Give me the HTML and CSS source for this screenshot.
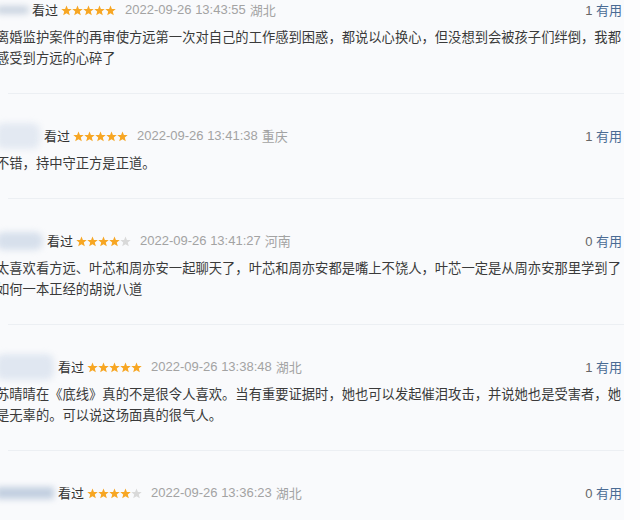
FILE: index.html
```html
<!DOCTYPE html>
<html lang="zh-CN">
<head>
<meta charset="utf-8">
<link rel="stylesheet" href="styles.css">
</head>
<body>
<svg width="0" height="0" class="defs">
  <defs>
    <symbol id="st" viewBox="0 0 11 11">
      <polygon points="5.5,0.4 6.9,3.9 10.7,4.1 7.8,6.5 8.8,10.3 5.5,8.2 2.2,10.3 3.2,6.5 0.3,4.1 4.1,3.9"/>
    </symbol>
  </defs>
</svg>
<div class="list">
  <div class="item">
    <div class="meta">
      <span class="name n1"></span>
      <span class="watched">看过</span>
      <svg class="stars" viewBox="0 0 55 11" width="55" height="11"><use href="#st" x="0" width="11" height="11" class="on"/><use href="#st" x="11" width="11" height="11" class="on"/><use href="#st" x="22" width="11" height="11" class="on"/><use href="#st" x="33" width="11" height="11" class="on"/><use href="#st" x="44" width="11" height="11" class="on"/></svg>
      <span class="date">2022-09-26 13:43:55</span>
      <span class="loc">湖北</span>
      <span class="useful"><span class="cnt">1</span> <span class="vote">有用</span></span>
    </div>
    <p class="text">离婚监护案件的再审使方远第一次对自己的工作感到困惑，都说以心换心，但没想到会被孩子们绊倒，我都感受到方远的心碎了</p>
  </div>
  <div class="sep"></div>
  <div class="item">
    <div class="meta">
      <span class="name n2"></span>
      <span class="watched">看过</span>
      <svg class="stars" viewBox="0 0 55 11" width="55" height="11"><use href="#st" x="0" width="11" height="11" class="on"/><use href="#st" x="11" width="11" height="11" class="on"/><use href="#st" x="22" width="11" height="11" class="on"/><use href="#st" x="33" width="11" height="11" class="on"/><use href="#st" x="44" width="11" height="11" class="on"/></svg>
      <span class="date">2022-09-26 13:41:38</span>
      <span class="loc">重庆</span>
      <span class="useful"><span class="cnt">1</span> <span class="vote">有用</span></span>
    </div>
    <p class="text">不错，持中守正方是正道。</p>
  </div>
  <div class="sep"></div>
  <div class="item">
    <div class="meta">
      <span class="name n3"></span>
      <span class="watched">看过</span>
      <svg class="stars" viewBox="0 0 55 11" width="55" height="11"><use href="#st" x="0" width="11" height="11" class="on"/><use href="#st" x="11" width="11" height="11" class="on"/><use href="#st" x="22" width="11" height="11" class="on"/><use href="#st" x="33" width="11" height="11" class="on"/><use href="#st" x="44" width="11" height="11" class="off"/></svg>
      <span class="date">2022-09-26 13:41:27</span>
      <span class="loc">河南</span>
      <span class="useful"><span class="cnt">0</span> <span class="vote">有用</span></span>
    </div>
    <p class="text">太喜欢看方远、叶芯和周亦安一起聊天了，叶芯和周亦安都是嘴上不饶人，叶芯一定是从周亦安那里学到了如何一本正经的胡说八道</p>
  </div>
  <div class="sep"></div>
  <div class="item">
    <div class="meta">
      <span class="name n4"></span>
      <span class="watched">看过</span>
      <svg class="stars" viewBox="0 0 55 11" width="55" height="11"><use href="#st" x="0" width="11" height="11" class="on"/><use href="#st" x="11" width="11" height="11" class="on"/><use href="#st" x="22" width="11" height="11" class="on"/><use href="#st" x="33" width="11" height="11" class="on"/><use href="#st" x="44" width="11" height="11" class="on"/></svg>
      <span class="date">2022-09-26 13:38:48</span>
      <span class="loc">湖北</span>
      <span class="useful"><span class="cnt">1</span> <span class="vote">有用</span></span>
    </div>
    <p class="text">苏晴晴在《底线》真的不是很令人喜欢。当有重要证据时，她也可以发起催泪攻击，并说她也是受害者，她是无辜的。可以说这场面真的很气人。</p>
  </div>
  <div class="sep"></div>
  <div class="item">
    <div class="meta">
      <span class="name n5"></span>
      <span class="watched">看过</span>
      <svg class="stars" viewBox="0 0 55 11" width="55" height="11"><use href="#st" x="0" width="11" height="11" class="on"/><use href="#st" x="11" width="11" height="11" class="on"/><use href="#st" x="22" width="11" height="11" class="on"/><use href="#st" x="33" width="11" height="11" class="on"/><use href="#st" x="44" width="11" height="11" class="off"/></svg>
      <span class="date">2022-09-26 13:36:23</span>
      <span class="loc">湖北</span>
      <span class="useful"><span class="cnt">0</span> <span class="vote">有用</span></span>
    </div>
  </div>
</div>
</body>
</html>
```
FILE: styles.css
```css
html, body {
  margin: 0;
  padding: 0;
  background: #fdfdfe;
  overflow: hidden;
}
.defs { position: absolute; }
.list {
  width: 628px;
  margin: -32px 0 0 -4px;
  background: #f9fafc;
  font-family: "Liberation Sans", "Noto Sans CJK SC", sans-serif;
  color: #3a3a3a;
}
.item {
  padding: 32px 0 25px 0;
}
.sep {
  height: 1px;
  margin-left: 12px;
  margin-right: 0;
  background: #eceff3;
}
.meta {
  display: flex;
  align-items: center;
  height: 20px;
  padding-right: 2px;
  font-size: 13px;
  line-height: 20px;
  white-space: nowrap;
}
.name {
  display: block;
  height: 22px;
  margin-right: 4px;
  background: #dfe6f0;
  filter: blur(3px);
  border-radius: 8px;
}
.n1 { width: 33px; height: 8px; margin-right: 3px; background: #c9d3e0; }
.n2 { width: 44px; height: 26px; background: #e3e9f2; }
.n3 { width: 47px; height: 18px; background: #d7e0ec; }
.n4 { width: 58px; height: 26px; background: #e0e7f1; }
.n5 { width: 58px; height: 12px; background: #c2cfe0; border-radius: 2px; }
.watched {
  font-family: "Noto Sans CJK SC", sans-serif;
  color: #333;
  margin-right: 3px;
}
.stars {
  display: block;
  margin-right: 9px;
}
.stars .on { fill: #f7a623; }
.stars .off { fill: #d9d9d9; }
.date {
  color: #a3a3a3;
  margin-right: 4px;
}
.loc {
  font-family: "Noto Sans CJK SC", sans-serif;
  color: #a3a3a3;
}
.useful {
  margin-left: auto;
  color: #666;
}
.useful .vote {
  font-family: "Noto Sans CJK SC", sans-serif;
  color: #4a6b94;
}
.text {
  margin: 6px 0 0 0;
  font-family: "Noto Sans CJK SC", sans-serif;
  font-size: 13.3px;
  line-height: 21px;
  color: #3a3a3a;
}
```
